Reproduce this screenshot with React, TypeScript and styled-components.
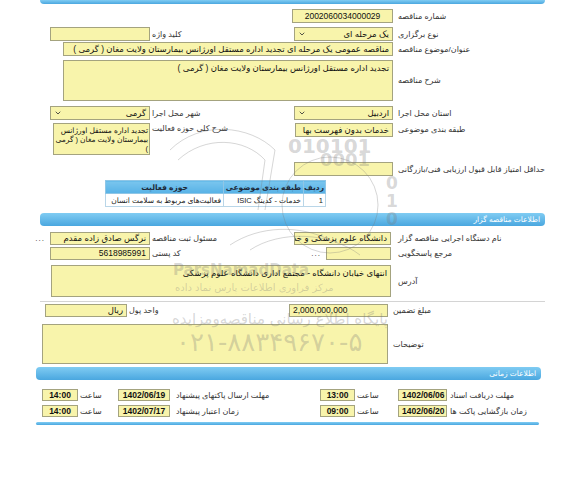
import styled, { createGlobalStyle } from "styled-components";
import { ChevronDown } from "lucide-react";

const GlobalStyle = createGlobalStyle`
  html, body { margin: 0; padding: 0; background: #fff; }
  body {
    font-family: "Liberation Sans", "DejaVu Sans", sans-serif;
    font-size: 8px;
    color: #333;
  }
  * { box-sizing: border-box; }
`;

const Page = styled.div`
  position: relative;
  width: 576px;
  height: 493px;
  direction: rtl;
  overflow: hidden;
`;

const Bar = styled.div<{ $left?: number; $right?: number; $top?: number }>`
  margin: ${(p) => p.$top ?? 0}px ${(p) => p.$right ?? 31}px 0 ${(p) => p.$left ?? 40}px;
  background: linear-gradient(#80ccf3, #4aa7df);
`;

const TopBar = styled(Bar)`
  height: 4px;
  border-radius: 0 0 4px 4px;
`;

const SectionHeader = styled(Bar)`
  height: 13px;
  line-height: 13px;
  border-radius: 4px;
  color: #fff;
  padding-right: 5px;
  font-size: 7.5px;
`;

const BottomBar = styled(Bar)`
  height: 3px;
  border-radius: 2px;
`;

const Row = styled.div<{ $cols: string; $top: number; $align?: string }>`
  display: grid;
  grid-template-columns: ${(p) => p.$cols};
  align-items: ${(p) => p.$align ?? "center"};
  margin: ${(p) => p.$top}px 31px 0 40px;
`;

const Label = styled.div<{ $pl?: number; $pt?: number }>`
  text-align: left;
  padding-left: ${(p) => p.$pl ?? 1}px;
  padding-top: ${(p) => p.$pt ?? 0}px;
  white-space: nowrap;
  color: #333;
`;

const Cell = styled.div<{ $pr?: number; $span?: number }>`
  display: flex;
  align-items: center;
  gap: 5px;
  padding-right: ${(p) => p.$pr ?? 0}px;
  grid-column: span ${(p) => p.$span ?? 1};
`;

const Field = styled.div<{ $w: number; $h?: number; $center?: boolean; $bold?: boolean; $ltr?: boolean }>`
  flex: none;
  width: ${(p) => p.$w}px;
  height: ${(p) => p.$h ?? 14}px;
  background: #f8f4ab;
  border: 1px solid #a4a37f;
  color: #111;
  font-size: 8.5px;
  line-height: ${(p) => (p.$h ?? 14) - 2}px;
  padding: 0 3px;
  white-space: nowrap;
  overflow: hidden;
  text-align: ${(p) => (p.$center ? "center" : "right")};
  font-weight: ${(p) => (p.$bold ? 700 : 400)};
  direction: ${(p) => (p.$ltr ? "ltr" : "rtl")};
  ${(p) => (p.$ltr && !p.$center ? "text-align: left;" : "")}
`;

const Area = styled(Field)<{ $small?: boolean }>`
  white-space: normal;
  font-size: ${(p) => (p.$small ? 7.5 : 8.5)}px;
  line-height: ${(p) => (p.$small ? 9 : 10)}px;
  padding: 2px ${(p) => (p.$small ? 1 : 3)}px;
`;

const Select = styled(Field)`
  display: flex;
  align-items: center;
  justify-content: space-between;
  svg { flex: none; color: #333; }
`;

const Dots = styled.span`
  color: #333;
  letter-spacing: 1px;
`;

const Separator = styled.div`
  height: 1px;
  background: #d4d4d4;
  margin: 4px 31px 0 40px;
`;

const TableWrap = styled.div`
  margin: 4px 250px 0 106px;
`;

const Table = styled.table`
  width: 220px;
  border-collapse: collapse;
  table-layout: fixed;
`;

const Th = styled.th<{ $w: number }>`
  width: ${(p) => p.$w}px;
  height: 13px;
  padding: 0 1px;
  background: linear-gradient(#79c5ee, #57b2e6);
  border: 1px solid #8fc6e6;
  color: #1d2a3a;
  font-weight: 700;
  font-size: 7.5px;
  text-align: center;
  white-space: nowrap;
  overflow: hidden;
`;

const Td = styled.td`
  height: 13px;
  padding: 0 2px;
  border: 1px solid #b9d6e8;
  color: #222;
  font-size: 7.5px;
  text-align: right;
  white-space: nowrap;
  overflow: hidden;
`;

const Watermark = styled.div`
  position: absolute;
  inset: 0;
  pointer-events: none;
  color: rgba(120, 120, 120, 0.3);
`;

const Mark = styled.div<{ $x: number; $y: number; $size: number; $bold?: boolean; $ltr?: boolean }>`
  position: absolute;
  left: ${(p) => p.$x}px;
  top: ${(p) => p.$y}px;
  font-size: ${(p) => p.$size}px;
  font-weight: ${(p) => (p.$bold ? 700 : 400)};
  line-height: 1;
  white-space: nowrap;
  direction: ${(p) => (p.$ltr ? "ltr" : "rtl")};
  font-family: "DejaVu Sans", sans-serif;
`;

const TOP_COLS = "148px 107px 140px 110px";
const MID_COLS = "153px 106px 158px 88px";
const TIME_COLS = "98px 52px 40px 37px 145px 56px 37px 40px";

const Chevron = () => <ChevronDown size={8} strokeWidth={2.5} />;

const TimeRow = ({ top, l1, d1, t1, l2, d2, t2 }: { top: number; l1: string; d1: string; t1: string; l2: string; d2: string; t2: string }) => (
  <Row $cols={TIME_COLS} $top={top}>
    <Label $pl={3}>{l1}</Label>
    <Cell><Field $w={49} $h={12} $bold $center $ltr>{d1}</Field></Cell>
    <Label $pl={2}>ساعت</Label>
    <Cell><Field $w={35} $h={12} $bold $center $ltr>{t1}</Field></Cell>
    <Label $pl={3}>{l2}</Label>
    <Cell $pr={3}><Field $w={52} $h={12} $bold $center $ltr>{d2}</Field></Cell>
    <Label $pl={0}>ساعت</Label>
    <Cell $pr={2}><Field $w={36} $h={12} $bold $center $ltr>{t2}</Field></Cell>
  </Row>
);

export default function App() {
  const title = "مناقصه عمومی یک مرحله ای تجدید اداره مستقل اورژانس بیمارستان ولایت مغان ( گرمی )";
  const desc = "تجدید اداره مستقل اورژانس بیمارستان ولایت مغان ( گرمی )";
  return (
    <Page>
      <GlobalStyle />
      <TopBar />

      <Row $cols={TOP_COLS} $top={5}>
        <Label>شماره مناقصه</Label>
        <Cell $pr={4}><Field $w={101} $center $ltr>2002060034000029</Field></Cell>
      </Row>

      <Row $cols={TOP_COLS} $top={4}>
        <Label>نوع برگزاری</Label>
        <Cell $pr={4}><Select $w={99}>یک مرحله ای<Chevron /></Select></Cell>
        <Label $pl={2}>کلید واژه</Label>
        <Cell><Field $w={100} /></Cell>
      </Row>

      <Row $cols={TOP_COLS} $top={1}>
        <Label>عنوان/موضوع مناقصه</Label>
        <Cell $pr={4} $span={3}><Field $w={330}>{title}</Field></Cell>
      </Row>

      <Row $cols={TOP_COLS} $top={4}>
        <Label>شرح مناقصه</Label>
        <Cell $pr={4} $span={3}><Area $w={330} $h={41}>{desc}</Area></Cell>
      </Row>

      <Row $cols={TOP_COLS} $top={5}>
        <Label>استان محل اجرا</Label>
        <Cell $pr={4}><Select $w={99}>اردبیل<Chevron /></Select></Cell>
        <Label $pl={2}>شهر محل اجرا</Label>
        <Cell><Select $w={100}>گرمی<Chevron /></Select></Cell>
      </Row>

      <Row $cols={TOP_COLS} $top={3} $align="start">
        <Label $pt={2}>طبقه بندی موضوعی</Label>
        <Cell $pr={4}><Field $w={98}>خدمات بدون فهرست بها</Field></Cell>
        <Label $pl={2} $pt={1}>شرح کلی حوزه فعالیت</Label>
        <Cell><Area $w={97} $h={32} $small>{desc}</Area></Cell>
      </Row>

      <Row $cols={TOP_COLS} $top={7}>
        <Label>حداقل امتیاز قابل قبول ارزیابی فنی/بازرگانی</Label>
        <Cell $pr={4}><Field $w={99} /></Cell>
      </Row>

      <TableWrap>
        <Table>
          <thead>
            <tr>
              <Th $w={22}>ردیف</Th>
              <Th $w={80}>طبقه بندی موضوعی</Th>
              <Th $w={118}>حوزه فعالیت</Th>
            </tr>
          </thead>
          <tbody>
            <tr>
              <Td>1</Td>
              <Td>خدمات - کدینگ ISIC</Td>
              <Td>فعالیت‌های مربوط به سلامت انسان</Td>
            </tr>
          </tbody>
        </Table>
      </TableWrap>

      <SectionHeader $top={6}>اطلاعات مناقصه گزار</SectionHeader>

      <Row $cols={TOP_COLS} $top={6}>
        <Label>نام دستگاه اجرایی مناقصه گزار</Label>
        <Cell $pr={6}><Field $w={97} $h={13}>دانشگاه علوم پزشکی و خدمات بهداشتی درمانی</Field></Cell>
        <Label $pl={2}>مسئول ثبت مناقصه</Label>
        <Cell><Field $w={100} $h={13}>نرگس صادق زاده مقدم</Field><Dots>...</Dots></Cell>
      </Row>

      <Row $cols={TOP_COLS} $top={2}>
        <Label>مرجع پاسخگویی</Label>
        <Cell $pr={6}><Field $w={65} $h={13} /><Dots>...</Dots></Cell>
        <Label $pl={2}>کد پستی</Label>
        <Cell><Field $w={100} $h={13}>5618985991</Field></Cell>
      </Row>

      <Row $cols={TOP_COLS} $top={5}>
        <Label>آدرس</Label>
        <Cell $pr={6} $span={3}><Area $w={340} $h={32}>انتهای خیابان دانشگاه - مجتمع اداری دانشگاه علوم پزشکی</Area></Cell>
      </Row>

      <Separator />

      <Row $cols={MID_COLS} $top={2}>
        <Label>مبلغ تضمین</Label>
        <Cell $pr={4}><Field $w={99} $h={13} $ltr>2,000,000,000</Field></Cell>
        <Label>واحد پول</Label>
        <Cell $pr={1}><Field $w={82} $h={13}>ریال</Field></Cell>
      </Row>

      <Row $cols={MID_COLS} $top={7}>
        <Label>توضیحات</Label>
        <Cell $pr={4} $span={3}><Area $w={346} $h={40} /></Cell>
      </Row>

      <SectionHeader $top={3} $left={36} $right={35}>اطلاعات زمانی</SectionHeader>

      <TimeRow top={9} l1="مهلت دریافت اسناد" d1="1402/06/06" t1="13:00" l2="مهلت ارسال پاکتهای پیشنهاد" d2="1402/06/19" t2="14:00" />
      <TimeRow top={4} l1="زمان بازگشایی پاکت ها" d1="1402/06/20" t1="09:00" l2="زمان اعتبار پیشنهاد" d2="1402/07/17" t2="14:00" />

      <BottomBar $top={5} $left={36} $right={37} />

      <Watermark>
        <svg width="576" height="493" style={{ position: "absolute", left: 0, top: 0 }}>
          <g fill="none" stroke="rgba(120,120,120,0.3)" strokeWidth="1">
            <circle cx="330" cy="205" r="48" />
            <path d="M170 150 C 200 120, 250 125, 275 150 L 265 210" />
            <path d="M178 160 C 205 135, 245 138, 265 160 L 258 210" />
            <path d="M230 245 C 260 225, 300 225, 330 240" />
            <path d="M250 250 C 280 230, 330 232, 360 255" />
          </g>
        </svg>
        <Mark $x={288} $y={136} $size={20} $bold $ltr>010101</Mark>
        <Mark $x={320} $y={151} $size={18} $bold $ltr>0001</Mark>
        <Mark $x={386} $y={175} $size={17} $bold $ltr>0</Mark>
        <Mark $x={386} $y={193} $size={17} $bold $ltr>1</Mark>
        <Mark $x={386} $y={211} $size={17} $bold $ltr>0</Mark>
        <Mark $x={173} $y={263} $size={15} $bold $ltr>ParsNamadData</Mark>
        <Mark $x={175} $y={283} $size={10}>مرکز فراوری اطلاعات پارس نماد داده</Mark>
        <Mark $x={172} $y={312} $size={15}>پایگاه اطلاع رسانی مناقصه‌ومزایده</Mark>
        <Mark $x={176} $y={329} $size={26} $ltr>۰۲۱-۸۸۳۴۹۶۷۰-۵</Mark>
      </Watermark>
    </Page>
  );
}
